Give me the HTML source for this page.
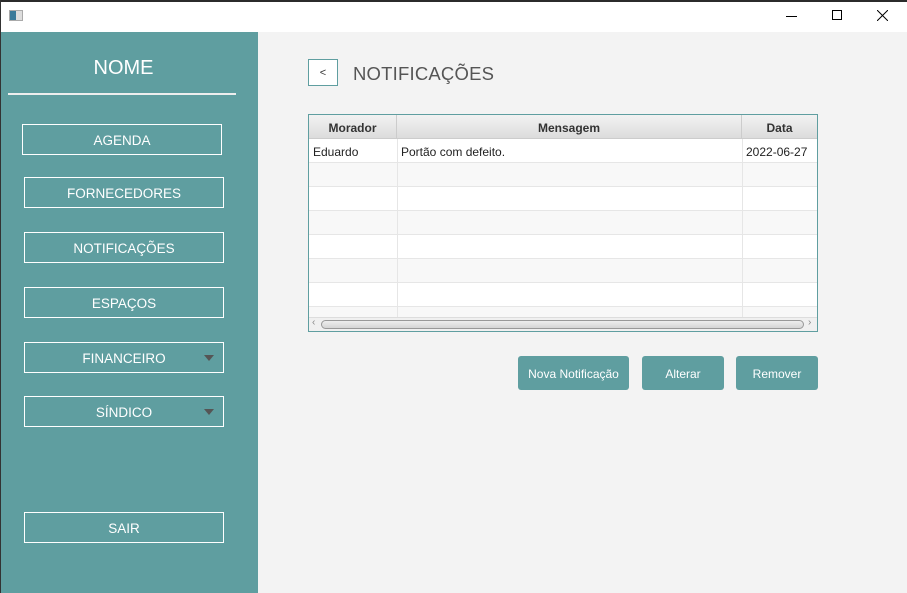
<!DOCTYPE html>
<html><head><meta charset="utf-8"><style>
*{box-sizing:border-box;margin:0;padding:0}
body{width:907px;height:593px;position:relative;overflow:hidden;background:#f3f3f3;font-family:"Segoe UI","Liberation Sans",sans-serif}
.abs{position:absolute}
#top{left:0;top:0;width:907px;height:2px;background:#2b2b2b}
#title{left:0;top:2px;width:907px;height:30px;background:#fff}
#lb{left:0;top:0;width:1px;height:593px;background:#333}
#side{left:1px;top:32px;width:257px;height:561px;background:#5f9ea0}
.sb{position:absolute;border:1.5px solid #fff;color:#fff;font-size:13.5px;display:flex;align-items:center;justify-content:center;width:200px;height:31px;padding-top:1px}
.arr{position:absolute;right:9px;top:12px;width:0;height:0;border-left:5px solid transparent;border-right:5px solid transparent;border-top:6px solid #555}
.hd{position:absolute;top:0;height:24px;font-weight:bold;font-size:12px;color:#333;display:flex;align-items:center;justify-content:center;padding-top:3px;background:linear-gradient(#f2f2f2,#dcdcdc);border-right:1px solid #ccc;border-bottom:1px solid #ccc}
.row{position:absolute;left:0;width:508px;height:24px;border-bottom:1px solid #e6e6e6}
.c{position:absolute;top:1px;height:24px;font-size:12px;color:#222;line-height:24px;padding-left:4px}
.vl{position:absolute;top:24px;width:1px;height:178px;background:#e6e6e6}
.ab{position:absolute;top:356px;height:34px;background:#5f9ea0;color:#fff;font-size:12px;border-radius:3px;display:flex;align-items:center;justify-content:center;padding-top:2px}
</style></head><body>
<div class="abs" id="title"></div>
<div class="abs" id="top"></div>
<div class="abs" style="left:9px;top:10px;width:14px;height:11px;border:1px solid #aaa;background:linear-gradient(90deg,#3a7a9a 50%,#ddd 50%)"></div>
<div class="abs" style="left:786px;top:16px;width:11px;height:1px;background:#000"></div>
<div class="abs" style="left:832px;top:10px;width:10px;height:10px;border:1px solid #000"></div>
<svg class="abs" style="left:877px;top:10px" width="11" height="11"><path d="M0 0L11 11M11 0L0 11" stroke="#000" stroke-width="1"/></svg>
<div class="abs" id="side">
<div class="abs" style="left:0;width:245px;top:25px;text-align:center;color:#fff;font-size:20px">NOME</div>
<div class="abs" style="left:7px;top:61px;width:228px;height:2px;background:#eee"></div>
<div class="sb" style="left:21px;top:92px">AGENDA</div>
<div class="sb" style="left:23px;top:145px">FORNECEDORES</div>
<div class="sb" style="left:23px;top:200px">NOTIFICAÇÕES</div>
<div class="sb" style="left:23px;top:255px">ESPAÇOS</div>
<div class="sb" style="left:23px;top:310px">FINANCEIRO<div class="arr"></div></div>
<div class="sb" style="left:23px;top:364px">SÍNDICO<div class="arr"></div></div>
<div class="sb" style="left:23px;top:480px">SAIR</div>
</div>
<div class="abs" id="lb"></div>
<div class="abs" style="left:308px;top:59px;width:30px;height:27px;border:1px solid #5f9ea0;background:#fff;font-size:11px;display:flex;align-items:center;justify-content:center;color:#333">&lt;</div>
<div class="abs" style="left:353px;top:63px;font-size:18.5px;color:#555;letter-spacing:.2px">NOTIFICAÇÕES</div>
<div class="abs" style="left:308px;top:114px;width:510px;height:218px;border:1px solid #5f9ea0;background:#fff;overflow:hidden">
<div class="hd" style="left:0;width:88px">Morador</div>
<div class="hd" style="left:88px;width:345px">Mensagem</div>
<div class="hd" style="left:433px;width:75px;border-right:none">Data</div>
<div class="row" style="top:24px;background:#fff"><div class="c" style="left:0">Eduardo</div><div class="c" style="left:88px">Portão com defeito.</div><div class="c" style="left:433px">2022-06-27</div></div>
<div class="row" style="top:48px;background:#f8f8f8"></div>
<div class="row" style="top:72px;background:#fff"></div>
<div class="row" style="top:96px;background:#f8f8f8"></div>
<div class="row" style="top:120px;background:#fff"></div>
<div class="row" style="top:144px;background:#f8f8f8"></div>
<div class="row" style="top:168px;background:#fff"></div>
<div class="row" style="top:192px;background:#f8f8f8"></div>
<div class="vl" style="left:88px"></div><div class="vl" style="left:433px"></div>
<div class="abs" style="left:0;top:202px;width:508px;height:14px;background:#f0f0f0;border-top:1px solid #ddd"></div>
<div class="abs" style="left:12px;top:205px;width:483px;height:9px;border:1px solid #999;border-radius:5px;background:linear-gradient(#eee,#d5d5d5)"></div>
<div class="abs" style="left:3px;top:202px;font-size:10px;color:#888">‹</div>
<div class="abs" style="left:499px;top:202px;font-size:10px;color:#888">›</div>
</div>
<div class="ab" style="left:518px;width:111px">Nova Notificação</div>
<div class="ab" style="left:642px;width:82px">Alterar</div>
<div class="ab" style="left:736px;width:82px">Remover</div>
</body></html>
